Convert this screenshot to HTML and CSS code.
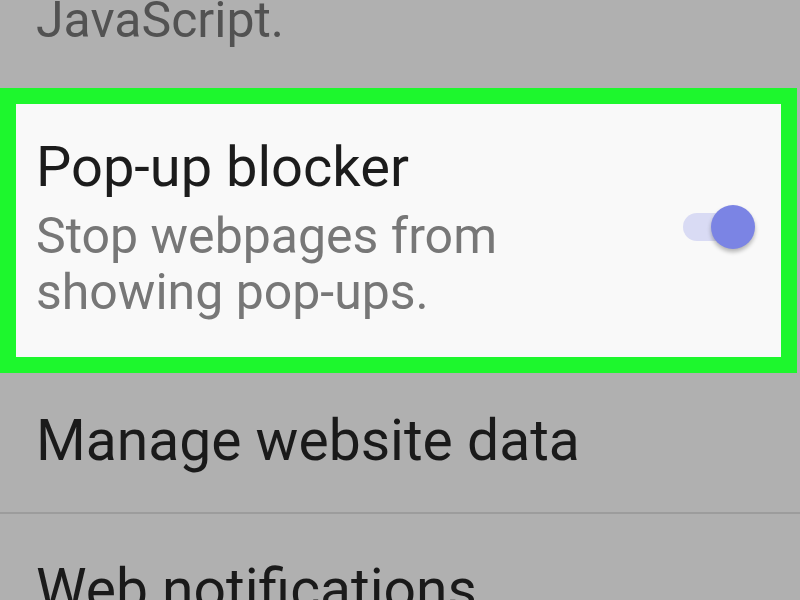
FILE: index.html
```html
<!DOCTYPE html>
<html lang="en">
<head>
    <meta charset="UTF-8">
    <title>Site settings</title>
    <link rel="stylesheet" href="styles.css">
</head>
<body>
    <div class="settings">
        <div class="item item-prev">
            <p class="summary">JavaScript.</p>
        </div>

        <div class="item item-active">
            <div class="item-text">
                <h2 class="title">Pop-up blocker</h2>
                <p class="summary">Stop webpages from<br>showing pop-ups.</p>
            </div>
            <div class="switch">
                <span class="switch-track"></span>
                <span class="switch-thumb"></span>
            </div>
        </div>

        <div class="item item-plain">
            <h2 class="title">Manage website data</h2>
        </div>

        <div class="item item-plain">
            <h2 class="title">Web notifications</h2>
        </div>
    </div>
</body>
</html>
```

FILE: styles.css
```css
* {
    margin: 0;
    padding: 0;
    box-sizing: border-box;
}

body {
    background: #b0b0b0;
    font-family: Roboto, 'Noto Sans', sans-serif;
    overflow: hidden;
    height: 600px;
}

.settings {
    display: flex;
    flex-direction: column;
}

.item {
    padding-left: 36px;
    flex-shrink: 0;
}

.title {
    font-size: 56px;
    font-weight: 400;
    line-height: 66px;
    color: #1c1c1c;
}

.summary {
    font-size: 50px;
    line-height: 56px;
    color: #525252;
}

.item-prev {
    height: 88px;
}

.item-prev .summary {
    margin-top: -8px;
}

/* highlighted row */
.item-active {
    display: flex;
    align-items: flex-start;
    width: 797px;
    height: 285px;
    border: 16px solid #1df72d;
    background: #f9f9f9;
    padding: 30px 0 0 20px;
}

.item-active .summary {
    margin-top: 8px;
    color: #777;
}

.item-text {
    flex: 1;
}

.switch {
    position: relative;
    width: 72px;
    height: 44px;
    margin: 71px 26px 0 0;
}

.switch-track {
    position: absolute;
    left: 0;
    top: 8px;
    width: 56px;
    height: 28px;
    border-radius: 14px;
    background: #d9dbf4;
}

.switch-thumb {
    position: absolute;
    right: 0;
    top: 0;
    width: 44px;
    height: 44px;
    border-radius: 50%;
    background: #7b84e4;
    box-shadow: 0 3px 4px rgba(0, 0, 0, 0.28);
}

.item-plain {
    height: 141px;
    padding-top: 35px;
    border-bottom: 2px solid #9c9c9c;
}

.item-plain:last-child {
    padding-top: 43px;
}

.item-plain .title {
    font-size: 57px;
    color: #1a1a1a;
}
```
